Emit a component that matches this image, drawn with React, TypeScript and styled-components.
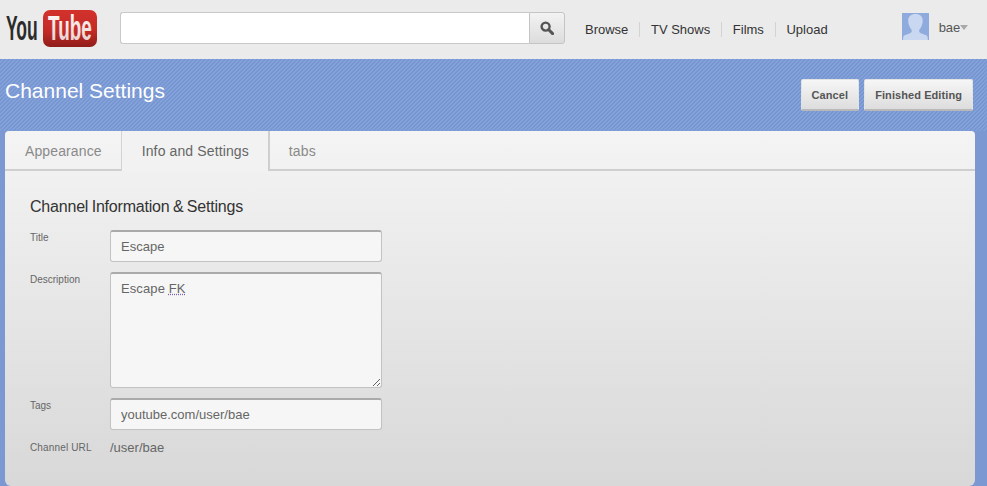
import styled, { createGlobalStyle } from 'styled-components'

const GlobalStyle = createGlobalStyle`
	html, body {
		margin: 0;
		padding: 0;
		height: 486px;
		overflow: hidden;
		background: #7b98d3;
		font-family: 'Liberation Sans', Arial, sans-serif;
	}
`

const navItems = ['Browse', 'TV Shows', 'Films', 'Upload']

const Logo = () => (
	<LogoSvg width="92" height="37" viewBox="0 0 92 37">
		<defs>
			<linearGradient id="tube" x1="0" y1="0" x2="0" y2="1">
				<stop offset="0" stopColor="#d3322c" />
				<stop offset="0.55" stopColor="#c42b26" />
				<stop offset="1" stopColor="#8f1d1a" />
			</linearGradient>
			<linearGradient id="tubeText" x1="0" y1="0" x2="0" y2="1">
				<stop offset="0" stopColor="#ffffff" />
				<stop offset="1" stopColor="#e6c9c6" />
			</linearGradient>
		</defs>
		<rect x="38" y="0" width="54" height="37" rx="7" fill="url(#tube)" />
		<LogoText transform="translate(1 30) scale(0.5 1)" fill="#2b2b2b">
			You
		</LogoText>
		<LogoText transform="translate(43 30) scale(0.54 1)" fill="url(#tubeText)">
			Tube
		</LogoText>
	</LogoSvg>
)

const Avatar = () => (
	<AvatarSvg width="27" height="27" viewBox="0 0 27 27">
		<rect width="27" height="27" fill="#8fabdd" />
		<path
			d="M13.5 1C9 1 6.2 3.4 6.2 7.6c0 3.6 1.4 7 3.2 8.8.5.6.5 2.2-.2 3-1.1 1.2-5 1.7-7 3.2-.9.7-1.2 2.6-1.2 4.4h24.9c0-1.8-.3-3.7-1.2-4.4-2-1.5-5.9-2-7-3.2-.7-.8-.7-2.4-.2-3 1.8-1.8 3.2-5.2 3.2-8.8C20.8 3.4 18 1 13.5 1z"
			fill="#c9d7f0"
		/>
	</AvatarSvg>
)

const SearchIcon = () => (
	<svg width="14" height="14" viewBox="0 0 14 14" fill="none">
		<circle cx="5.6" cy="5.6" r="4" stroke="#555" strokeWidth="2.4" />
		<line x1="8.8" y1="8.8" x2="12.6" y2="12.6" stroke="#555" strokeWidth="3" strokeLinecap="round" />
	</svg>
)

export default function App() {
	return (
		<Page>
			<GlobalStyle />
			<Header>
				<Logo />
				<SearchBox>
					<SearchInput type="text" aria-label="Search" />
					<SearchButton type="button" aria-label="Search">
						<SearchIcon />
					</SearchButton>
				</SearchBox>
				<Nav>
					{navItems.map((item) => (
						<NavLink key={item}>{item}</NavLink>
					))}
				</Nav>
				<User>
					<Avatar />
					<UserName>bae</UserName>
					<Caret />
				</User>
			</Header>
			<Band>
				<PageTitle>Channel Settings</PageTitle>
				<Actions>
					<ActionButton type="button">Cancel</ActionButton>
					<ActionButton type="button">Finished Editing</ActionButton>
				</Actions>
			</Band>
			<Panel>
				<Tabs>
					<Tab>Appearance</Tab>
					<Tab $active>Info and Settings</Tab>
					<Tab>tabs</Tab>
				</Tabs>
				<Content>
					<Heading>Channel Information &amp; Settings</Heading>
					<Form>
						<Label>Title</Label>
						<Field type="text" value="Escape" readOnly />
						<Label>Description</Label>
						<AreaField>
							Escape <Misspelled>FK</Misspelled>
						</AreaField>
						<Label>Tags</Label>
						<Field type="text" value="youtube.com/user/bae" readOnly />
						<UrlLabel>Channel URL</UrlLabel>
						<UrlValue>/user/bae</UrlValue>
					</Form>
				</Content>
			</Panel>
		</Page>
	)
}

const Page = styled.div`
	width: 987px;
	height: 486px;
	overflow: hidden;
	display: flex;
	flex-direction: column;
`
const Header = styled.header`
	flex: none;
	height: 59px;
	box-sizing: border-box;
	display: flex;
	align-items: flex-start;
	background-color: #ebebeb;
`
const LogoSvg = styled.svg`
	flex: none;
	margin: 10px 0 0 5px;
	overflow: visible;
`
const LogoText = styled.text`
	font-family: 'Liberation Sans', Arial, sans-serif;
	font-weight: 700;
	font-size: 35px;
`
const SearchBox = styled.div`
	flex: none;
	display: flex;
	margin: 12px 0 0 23px;
	width: 445px;
	height: 32px;
`
const SearchInput = styled.input`
	flex: 1;
	min-width: 0;
	box-sizing: border-box;
	background: #fff;
	border: 1px solid #c9c9c9;
	border-right: none;
	border-radius: 3px 0 0 3px;
	outline: none;
`
const SearchButton = styled.button`
	flex: none;
	width: 36px;
	padding: 0;
	display: flex;
	align-items: center;
	justify-content: center;
	background: linear-gradient(#f3f3f3, #dcdcdc);
	border: 1px solid #c4c4c4;
	border-radius: 0 3px 3px 0;
`
const Nav = styled.nav`
	flex: none;
	display: flex;
	align-items: center;
	margin: 22px 0 0 20px;
	height: 15px;
`
const NavLink = styled.span`
	font-size: 13px;
	line-height: 15px;
	color: #333;
	padding: 0 11px 0 10.6px;
	border-left: 1px solid #d3d3d3;

	&:first-child {
		padding-left: 0;
		border-left: none;
	}
`
const User = styled.div`
	flex: none;
	display: flex;
	margin: 13px 0 0 63px;
`
const AvatarSvg = styled.svg`
	display: block;
`
const UserName = styled.span`
	margin: 7px 0 0 10px;
	font-size: 13px;
	line-height: 15px;
	color: #555;
`
const Caret = styled.span`
	width: 0;
	height: 0;
	margin-top: 12px;
	border-left: 4px solid transparent;
	border-right: 4px solid transparent;
	border-top: 5px solid #a8a8a8;
`
const Band = styled.section`
	flex: none;
	height: 72px;
	box-sizing: border-box;
	display: flex;
	align-items: flex-start;
	justify-content: space-between;
	padding: 20px 14px 0 5px;
	background-color: #7595d3;
	background-image: linear-gradient(
		-45deg,
		rgba(255, 255, 255, 0.11) 25%,
		transparent 25%,
		transparent 50%,
		rgba(255, 255, 255, 0.11) 50%,
		rgba(255, 255, 255, 0.11) 75%,
		transparent 75%
	);
	background-size: 4px 4px;
`
const PageTitle = styled.h1`
	margin: 0;
	font-size: 21px;
	line-height: 24px;
	font-weight: 400;
	color: #fff;
`
const Actions = styled.div`
	display: flex;
	gap: 5px;
`
const ActionButton = styled.button`
	height: 32px;
	box-sizing: border-box;
	padding: 0 10px;
	font-family: inherit;
	font-size: 11px;
	font-weight: 700;
	letter-spacing: 0.08px;
	color: #555;
	background: linear-gradient(#f6f6f6, #dddddd);
	border: 1px solid #e2e2e2;
	border-bottom: 2px solid #b8b8b8;
	border-radius: 2px;
`
const Panel = styled.main`
	flex: 1;
	width: 970px;
	box-sizing: border-box;
	margin-left: 5px;
	display: flex;
	flex-direction: column;
	border-radius: 4px 4px 6px 6px;
	background: linear-gradient(#f4f4f4, #d8d8d8);
`
const Tabs = styled.div`
	flex: none;
	display: flex;
	height: 40px;
	box-sizing: border-box;
	padding-left: 1px;
	border-bottom: 2px solid #cfcfcf;
`
const Tab = styled.div<{ $active?: boolean }>`
	height: ${(p) => (p.$active ? '40px' : '38px')};
	box-sizing: border-box;
	padding: 12px 19px 0 ${(p) => (p.$active ? '20px' : '19px')};
	font-size: 14px;
	line-height: 16px;
	letter-spacing: 0.12px;
	color: ${(p) => (p.$active ? '#666' : '#8a8a8a')};
	background: ${(p) => (p.$active ? '#f2f2f2' : 'transparent')};
	border-left: ${(p) => (p.$active ? '1px solid #d4d4d4' : 'none')};
	border-right: ${(p) => (p.$active ? '2px solid #cfcfcf' : 'none')};
`
const Content = styled.div`
	padding: 27px 0 0 25px;
`
const Heading = styled.h2`
	margin: 0 0 14px;
	font-size: 16px;
	line-height: 18px;
	font-weight: 400;
	letter-spacing: -0.2px;
	word-spacing: -0.8px;
	color: #333;
`
const Form = styled.div`
	display: grid;
	grid-template-columns: 80px 272px;
	row-gap: 10px;
`
const Label = styled.label`
	padding-top: 2px;
	font-size: 10px;
	line-height: 12px;
	color: #666;
`
const Field = styled.input`
	width: 272px;
	height: 32px;
	box-sizing: border-box;
	padding: 0 10px;
	font-family: inherit;
	font-size: 13px;
	color: #666;
	background: #f6f6f6;
	border: 1px solid #c2c2c2;
	border-top: 2px solid #aaa;
	border-radius: 3px;
	outline: none;
`
const AreaField = styled.div`
	width: 272px;
	height: 116px;
	box-sizing: border-box;
	padding: 7px 10px;
	font-size: 13px;
	line-height: 15px;
	letter-spacing: 0.1px;
	color: #666;
	background: #f6f6f6;
	border: 1px solid #c2c2c2;
	border-top: 2px solid #aaa;
	border-radius: 3px;
	resize: both;
	overflow: auto;
`
const Misspelled = styled.span`
	text-decoration: underline dotted #7a5fb5;
`
const UrlLabel = styled.span`
	font-size: 10px;
	line-height: 14px;
	letter-spacing: 0.15px;
	color: #666;
	margin-top: 1px;
`
const UrlValue = styled.span`
	font-size: 13px;
	line-height: 16px;
	color: #666;
`
